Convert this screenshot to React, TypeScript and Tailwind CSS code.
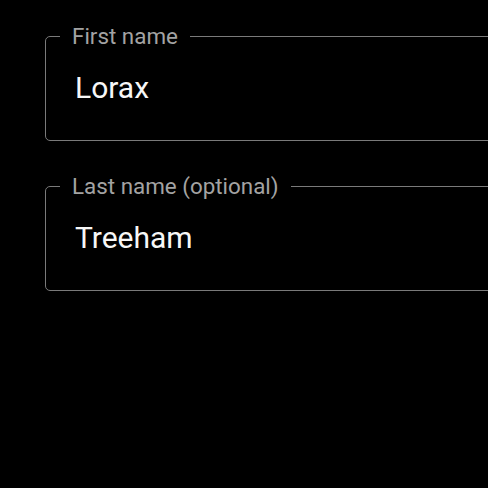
import React from "react";

function Field({ label, value }: { label: string; value: string }) {
  return (
    <fieldset className="w-[520px] h-[118px] shrink-0 border border-[#7a7a7a] rounded-[5px] px-[14px] m-0">
      <legend className="px-[12px] text-[22.4px] leading-[26px] text-[#a3a3a3]">{label}</legend>
      <div className="pl-[15px] pt-[21px] text-[30px] leading-[36px] text-[#f7f7f7]">{value}</div>
    </fieldset>
  );
}

export default function App() {
  return (
    <div
      className="w-[488px] h-[488px] overflow-hidden bg-black pl-[45px] pt-[23px] flex flex-col gap-[32px]"
      style={{ fontFamily: "Roboto, 'Noto Sans', sans-serif" }}
    >
      <Field label="First name" value="Lorax" />
      <Field label="Last name (optional)" value="Treeham" />
    </div>
  );
}
